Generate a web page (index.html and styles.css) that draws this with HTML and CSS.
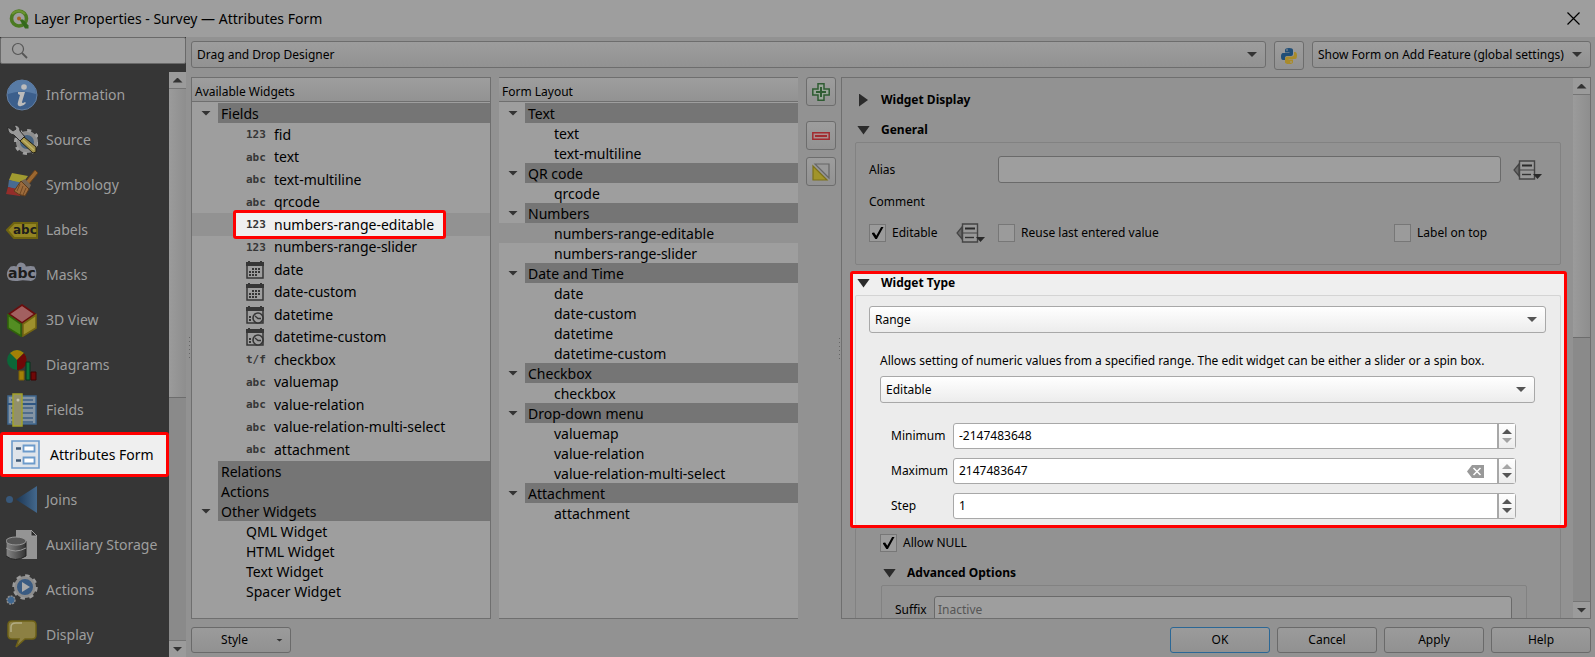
FILE: index.html
```html
<!DOCTYPE html>
<html lang="en">
<head>
  <meta charset="UTF-8" />
  <meta name="viewport" content="width=device-width, initial-scale=1.0"/>
  <title>Layer Properties - Survey — Attributes Form</title>
  <link rel="stylesheet" href="styles.css">
</head>
<body>

  <!-- shared icons -->
  <svg class="defs" width="0" height="0" aria-hidden="true">
    <symbol id="i-date" viewBox="0 0 18 18">
      <path d="M1 1v16h16V1" fill="none" stroke="#363636" stroke-width="1.500"/>
      <path d="M0 1h2V0h2v1h10V0h2v1h2v4H0z" fill="#363636"/>
      <path d="M6 7h2v2H6zM9 7h2v2H9zM12 7h2v2h-2zM3 10h2v2H3zM6 10h2v2H6zM9 10h2v2H9zM12 10h2v2h-2zM3 13h2v2H3zM6 13h2v2H6zM9 13h2v2H9z" fill="#363636"/>
    </symbol>
    <symbol id="i-datetime" viewBox="0 0 18 18">
      <path d="M1 1v16h16V1" fill="none" stroke="#363636" stroke-width="1.500"/>
      <path d="M0 1h2V0h2v1h10V0h2v1h2v4H0z" fill="#363636"/>
      <path d="M3 10h2v2H3zM3 13h2v2H3z" fill="#363636"/>
      <circle cx="12" cy="12" r="5" fill="#9e9e9e" stroke="#363636" stroke-width="1.600"/>
      <path d="M9 10l3 2.500h3" fill="none" stroke="#363636" stroke-width="1.300"/>
    </symbol>
    <symbol id="i-override" viewBox="0 0 29 20">
      <path d="M6 4L1 10l5 6z" fill="#6a6a6a" stroke="#444" stroke-width="1.200"/>
      <path d="M6.500 1h15v18h-15z" fill="#989898" stroke="#444" stroke-width="1.400"/>
      <path d="M6 10h16" stroke="#444"/>
      <path d="M9 5.500h10" stroke="#2a2a2a" stroke-width="2"/>
      <path d="M9 14.500h9" stroke="#333" stroke-width="1.400"/>
      <path d="M20 14h9l-4.500 5z" fill="#2a2a2a"/>
    </symbol>
  </svg>

  <header class="titlebar">
    <svg width="20" height="20" viewBox="0 0 20 20">
      <circle cx="10" cy="9.500" r="7.500" fill="none" stroke="#4b7a22" stroke-width="3.600"/>
      <path d="M3 5a8.500 8.500 0 0 1 13 0" fill="none" stroke="#6b9331" stroke-width="2"/>
      <path d="M10.500 10.500h3.500l5.500 6v3H16z" fill="#33691c"/>
      <circle cx="10" cy="9.500" r="2" fill="#a5651f"/>
    </svg>
    <h1>Layer Properties - Survey — Attributes Form</h1>
    <button class="close" aria-label="Close">
      <svg width="13" height="13" viewBox="0 0 13 13"><path d="M.5.5l12 12M12.500.5l-12 12" stroke="#000" stroke-width="1.200"/></svg>
    </button>
  </header>

  <div class="window">
    <aside class="sidebar">
      <label class="search">
        <svg width="17" height="17" viewBox="0 0 17 17"><circle cx="7" cy="7" r="5.500" fill="none" stroke="#555" stroke-width="1.200"/><path d="M11 11l5 5" stroke="#555" stroke-width="1.800"/></svg>
        <input type="text" aria-label="Search">
      </label>
      <div class="sidebar-body">
        <nav>
          <a href="#">
            <svg width="32" height="32" viewBox="0 0 32 32"><circle cx="16" cy="16" r="15" fill="#3c5f8c" stroke="#6480a3"/><path d="M2 15a14 14 0 0 1 28 0q-14-5-28 0z" fill="#587ba5"/><circle cx="18" cy="8" r="2.800" fill="#bbb"/><path d="M12 13h7l-3 10q0 2 3 0l1 1q-3 4-7 3-2-1-1-4l2-7-2-1z" fill="#bbb"/></svg>
            Information
          </a>
          <a href="#">
            <svg width="32" height="32" viewBox="0 0 32 32"><circle cx="21" cy="18" r="9" fill="#46627f" stroke="#8d8d8d" stroke-width="4"/><circle cx="21" cy="18" r="11.500" fill="none" stroke="#a0a0a0" stroke-width="3" stroke-dasharray="4 5"/><path d="M2 3l5 4 3-2-2-4q6 0 6 6l5 6-5 4-6-6Q1 10 2 3z" fill="#999" stroke="#2c2c2c"/><path d="M14 17l4-4 12 10v5l-3 1z" fill="#a2934b" stroke="#272315"/><path d="M17 16l11 10" stroke="#c0b366" stroke-width="1.500"/></svg>
            Source
          </a>
          <a href="#">
            <svg width="32" height="32" viewBox="0 0 32 32"><path d="M6 4l16 3-6 8L3 11z" fill="#a09a30"/><path d="M3 11l14 3-3 8-12-4z" fill="#486b91"/><path d="M2 18l14 3-2 6-14-2z" fill="#942d2a"/><path d="M29 1l3 3-9 11-3-3z" fill="#9b6730" stroke="#67401a"/><path d="M19 10l6 6-2 4-8-8z" fill="#766552"/><path d="M15 12l8 8-4 7q-7-1-11-5z" fill="#9c6b3c" stroke="#5f3c1b"/><path d="M14 15l-3 7M17 17l-3 8M20 19l-3 7" stroke="#704824"/></svg>
            Symbology
          </a>
          <a href="#">
            <svg width="32" height="32" viewBox="0 0 32 32"><path d="M1 16l7-7h23v15H8z" fill="#938522" stroke="#6f6410" stroke-width="2"/><text x="7" y="20" class="abc">abc</text></svg>
            Labels
          </a>
          <a href="#">
            <svg width="34" height="32" viewBox="0 0 34 32"><path d="M5 7q4-1 6 0 2-5 6-4 4 1 4 4 6-1 9 0 4 6 1 13-3 3-6 2-9-1-11 0-6 1-11-1-5-7 2-14z" fill="#858894"/><text x="2" y="19" class="abc big">abc</text></svg>
            Masks
          </a>
          <a href="#">
            <svg width="32" height="34" viewBox="0 0 32 34"><path d="M16 2l13 9-13 9L3 11z" fill="#a26060" stroke="#690d0d" stroke-width="1.600"/><path d="M2 12l13 9v12L2 25z" fill="#538d22" stroke="#30630b" stroke-width="1.600"/><path d="M30 12l-13 9v12l13-8z" fill="#9e902d" stroke="#746512" stroke-width="1.600"/></svg>
            3D View
          </a>
          <a href="#">
            <svg width="32" height="32" viewBox="0 0 32 32"><circle cx="11" cy="11" r="10" fill="#0c6638"/><path d="M11 11L4 4q7-6 14 0z" fill="#a18006"/><path d="M11 11l7-7q5 6 1 13-3 4-8 4z" fill="#6f0808"/><path d="M13 22h5v9h-5z" fill="#a18006" stroke="#7b6006"/><path d="M20 13h4v18h-4z" fill="#0b7039" stroke="#07331c"/><path d="M25 23h5v8h-5z" fill="#700808" stroke="#3e0303"/></svg>
            Diagrams
          </a>
          <a href="#">
            <svg width="32" height="34" viewBox="0 0 32 34"><path d="M2 3h28v28H2z" fill="#8494a4" stroke="#3e658d" stroke-width="1.500"/><path d="M2 11h28" stroke="#2f5682" stroke-width="2"/><path d="M5 7h22M5 15h22M5 20h22M5 25h22M5 29h22" stroke="#3f5f83" stroke-width="1.500"/><path d="M7 1h9v32H7z" fill="#92906a" stroke="#a2a12a" stroke-width="1.500"/><circle cx="12" cy="7" r="1.500" fill="#c4c4b0"/></svg>
            Fields
          </a>
          <a href="#" class="active">
            <svg width="29" height="29" viewBox="0 0 29 29"><path d="M1 1h27v27H1z" fill="#dfe4ea" stroke="#6d9bcb" stroke-width="1.600"/><path d="M12.500 5.500h11v6h-11zM12.500 17.500h11v6h-11z" fill="#fff" stroke="#6d9bcb" stroke-width="1.800"/><path d="M5 8.500h5M5 20.500h5" stroke="#415a76" stroke-width="2.500"/></svg>
            Attributes Form
          </a>
          <a href="#">
            <svg width="32" height="32" viewBox="0 0 32 32"><defs><linearGradient id="join"><stop offset="0" stop-color="#1d3754"/><stop offset="1" stop-color="#43688d"/></linearGradient></defs><circle cx="3.500" cy="15.500" r="3.500" fill="#38587a"/><path d="M10 15.500L31 2v27z" fill="url(#join)"/></svg>
            Joins
          </a>
          <a href="#">
            <svg width="32" height="32" viewBox="0 0 32 32"><path d="M10 1h15l6 6v23H10z" fill="#949494"/><path d="M25 1v6h6z" fill="#292929" stroke="#9e9e9e"/><defs><linearGradient id="disk"><stop offset="0" stop-color="#888"/><stop offset="1" stop-color="#333"/></linearGradient></defs><path d="M0 12v15q9 7 20 0V12z" fill="url(#disk)" stroke="#222"/><path d="M0 19q9 6 20 0" fill="none" stroke="#999"/><ellipse cx="10" cy="12" rx="10" ry="4" fill="#555" stroke="#999"/></svg>
            Auxiliary Storage
          </a>
          <a href="#">
            <svg width="32" height="34" viewBox="0 0 32 34"><circle cx="19" cy="14" r="9.500" fill="#3a5b82" stroke="#8c8c8c" stroke-width="3"/><circle cx="19" cy="14" r="11.500" fill="none" stroke="#9a9a9a" stroke-width="2.500" stroke-dasharray="4.500 4.500"/><path d="M16 9l8 5-8 5z" fill="#aaa"/><circle cx="5" cy="27" r="4" fill="#40678f" stroke="#8c8c8c" stroke-width="1.500" stroke-dasharray="2 1"/></svg>
            Actions
          </a>
          <a href="#">
            <svg width="32" height="32" viewBox="0 0 32 32"><path d="M6 2h20q4 0 4 4v10q0 4-4 4h-7l-9 8 3-8H6q-4 0-4-4V6q0-4 4-4z" fill="#8c8043" stroke="#6e6118" stroke-width="1.500"/><path d="M5 13V8q0-4 5-4h6" fill="none" stroke="#b2ac84" stroke-width="1.500"/></svg>
            Display
          </a>
        </nav>
        <div class="scrollbar">
          <button aria-label="Scroll up"><i class="tri up"></i></button>
          <div class="track"><div class="thumb side-thumb"></div></div>
          <button aria-label="Scroll down"><i class="tri"></i></button>
        </div>
      </div>
    </aside>
    <div class="splitter"></div>

    <main>
      <div class="toolbar">
        <span class="combo grow">
          <select aria-label="Form designer"><option>Drag and Drop Designer</option></select>
        </span>
        <button class="tool" aria-label="Python init function">
          <svg width="18" height="18" viewBox="0 0 18 18"><path d="M9 1Q5 1 5 3v2.500h4.500V6H3Q1 6 1 9.500T3 13h2v-2q0-2 2-2h4q2 0 2-2V3q0-2-4-2z" fill="#204e77"/><path d="M9 17q4 0 4-2v-2.500H8.500V12H15q2 0 2-3.500T15 5h-1v2.500Q14 9.500 12 9.500H7.500Q5 9.500 5 12v3q0 2 4 2z" fill="#a98b2b"/><circle cx="7" cy="3" r=".8" fill="#9e9e9e"/><circle cx="11" cy="15" r=".8" fill="#9e9e9e"/></svg>
        </button>
        <span class="combo feature">
          <select aria-label="Show form"><option>Show Form on Add Feature (global settings)</option></select>
        </span>
      </div>

      <div class="panels">
        <div class="tree">
          <div class="tree-head">Available Widgets</div>
          <details open>
            <summary><i class="tri"></i><span>Fields</span></summary>
            <ul class="fields">
              <li><b>123</b>fid</li>
              <li><b>abc</b>text</li>
              <li><b>abc</b>text-multiline</li>
              <li><b>abc</b>qrcode</li>
              <li class="selected"><b>123</b>numbers-range-editable</li>
              <li><b>123</b>numbers-range-slider</li>
              <li><svg width="18" height="18"><use href="#i-date"/></svg>date</li>
              <li><svg width="18" height="18"><use href="#i-date"/></svg>date-custom</li>
              <li><svg width="18" height="18"><use href="#i-datetime"/></svg>datetime</li>
              <li><svg width="18" height="18"><use href="#i-datetime"/></svg>datetime-custom</li>
              <li><b>t/f</b>checkbox</li>
              <li><b>abc</b>valuemap</li>
              <li><b>abc</b>value-relation</li>
              <li><b>abc</b>value-relation-multi-select</li>
              <li><b>abc</b>attachment</li>
            </ul>
          </details>
          <div class="group"><span>Relations</span></div>
          <div class="group"><span>Actions</span></div>
          <details open>
            <summary><i class="tri"></i><span>Other Widgets</span></summary>
            <ul>
              <li>QML Widget</li>
              <li>HTML Widget</li>
              <li>Text Widget</li>
              <li>Spacer Widget</li>
            </ul>
          </details>
        </div>

        <div class="tree layout">
          <div class="tree-head">Form Layout</div>
          <details open>
            <summary><i class="tri"></i><span>Text</span></summary>
            <ul><li>text</li><li>text-multiline</li></ul>
          </details>
          <details open>
            <summary><i class="tri"></i><span>QR code</span></summary>
            <ul><li>qrcode</li></ul>
          </details>
          <details open>
            <summary><i class="tri"></i><span>Numbers</span></summary>
            <ul><li class="current">numbers-range-editable</li><li>numbers-range-slider</li></ul>
          </details>
          <details open>
            <summary><i class="tri"></i><span>Date and Time</span></summary>
            <ul><li>date</li><li>date-custom</li><li>datetime</li><li>datetime-custom</li></ul>
          </details>
          <details open>
            <summary><i class="tri"></i><span>Checkbox</span></summary>
            <ul><li>checkbox</li></ul>
          </details>
          <details open>
            <summary><i class="tri"></i><span>Drop-down menu</span></summary>
            <ul><li>valuemap</li><li>value-relation</li><li>value-relation-multi-select</li></ul>
          </details>
          <details open>
            <summary><i class="tri"></i><span>Attachment</span></summary>
            <ul><li>attachment</li></ul>
          </details>
        </div>

        <div class="tools">
          <button class="tool" aria-label="Add">
            <svg width="18" height="18" viewBox="0 0 18 18"><path d="M6 .8h6V6h5.200v6H12v5.200H6V12H.8V6H6z" fill="#9aa69a" stroke="#2f5c33" stroke-width="1.500"/><path d="M9 4v10M4 9h10" stroke="#2f5c33" stroke-width="2"/></svg>
          </button>
          <button class="tool" aria-label="Remove">
            <svg width="18" height="8" viewBox="0 0 18 8"><path d="M.8.8h16.400v6.400H.8z" fill="#ab8f8f" stroke="#a12c30" stroke-width="1.500"/><path d="M3 4h12" stroke="#a12c30" stroke-width="2"/></svg>
          </button>
          <button class="tool" aria-label="Invert selection">
            <svg width="18" height="18" viewBox="0 0 18 18"><path d="M3 1h14v14z" fill="#999" stroke="#666" stroke-width="1.200"/><path d="M1 3v14h14z" fill="#a1942a" stroke="#7c711b" stroke-width="1.200"/></svg>
          </button>
        </div>
        <div class="splitter"></div>

        <section class="options">
          <div class="content">
            <div class="section closed">
              <h2><i class="fold right"></i>Widget Display</h2>
            </div>

            <div class="section">
              <h2><i class="fold"></i>General</h2>
              <div class="box general">
                <div class="row">
                  <label class="name" for="alias">Alias</label>
                  <input class="field" id="alias" type="text">
                  <button class="override" aria-label="Data defined override"><svg width="29" height="20"><use href="#i-override"/></svg></button>
                </div>
                <div class="comment">Comment</div>
                <div class="row">
                  <div class="name editable">
                    <label class="check"><input type="checkbox" checked>Editable</label>
                    <button class="override" aria-label="Data defined override"><svg width="29" height="20"><use href="#i-override"/></svg></button>
                  </div>
                  <label class="check grow"><input type="checkbox">Reuse last entered value</label>
                  <label class="check on-top"><input type="checkbox">Label on top</label>
                </div>
              </div>
            </div>

            <div class="section highlight">
              <h2><i class="fold"></i>Widget Type</h2>
              <div class="box type">
                <span class="combo">
                  <select aria-label="Widget type"><option>Range</option></select>
                </span>
                <div class="inner">
                  <p>Allows setting of numeric values from a specified range. The edit widget can be either a slider or a spin box.</p>
                  <span class="combo">
                    <select aria-label="Range widget"><option>Editable</option></select>
                  </span>
                  <div class="spins">
                    <label for="min">Minimum</label>
                    <div class="spin">
                      <input id="min" type="number" value="-2147483648">
                      <div class="steps"><button aria-label="Up"><i class="tri up"></i></button><button aria-label="Down" disabled><i class="tri"></i></button></div>
                    </div>
                    <label for="max">Maximum</label>
                    <div class="spin">
                      <input id="max" type="number" value="2147483647">
                      <button class="clear" aria-label="Clear"><svg width="17" height="13" viewBox="0 0 17 13"><path d="M0 6.500L5 0h12v13H5z" fill="#999"/><path d="M6.500 3l7 7M13.500 3l-7 7" stroke="#fff" stroke-width="1.500"/></svg></button>
                      <div class="steps"><button aria-label="Up" disabled><i class="tri up"></i></button><button aria-label="Down"><i class="tri"></i></button></div>
                    </div>
                    <label for="step">Step</label>
                    <div class="spin">
                      <input id="step" type="number" value="1">
                      <div class="steps"><button aria-label="Up"><i class="tri up"></i></button><button aria-label="Down"><i class="tri"></i></button></div>
                    </div>
                  </div>
                </div>
              </div>
            </div>

            <div class="section rest">
              <div class="box more">
                <label class="check"><input type="checkbox" checked>Allow NULL</label>
                <div class="advanced">
                  <h2><i class="fold"></i>Advanced Options</h2>
                  <div class="box suffix">
                    <label for="suffix">Suffix</label>
                    <input class="field" id="suffix" type="text" placeholder="Inactive">
                  </div>
                </div>
              </div>
            </div>
          </div>
          <div class="scrollbar">
            <button aria-label="Scroll up"><i class="tri up"></i></button>
            <div class="track"><div class="thumb"></div></div>
            <button aria-label="Scroll down"><i class="tri"></i></button>
          </div>
        </section>
      </div>

      <footer>
        <button class="btn style">Style<i class="tri small"></i></button>
        <button class="btn ok">OK</button>
        <button class="btn">Cancel</button>
        <button class="btn">Apply</button>
        <button class="btn">Help</button>
      </footer>
    </main>
  </div>

</body>
</html>
```

FILE: styles.css
```css
*,
*::before,
*::after {
  margin: 0;
  padding: 0;
  box-sizing: border-box;
}
body {
  height: 100vh;
  display: flex;
  flex-direction: column;
  overflow: hidden;
  background: #929292;
  color: #000;
  font-family: "Noto Sans", "Open Sans", sans-serif;
  font-size: 12px;
  line-height: 18px;
}
button,
input,
select {
  font: inherit;
  color: inherit;
}
button {
  display: flex;
  align-items: center;
  justify-content: center;
  background: none;
  border: none;
}
svg {
  flex: none;
}
ul {
  list-style: none;
}
.defs {
  position: absolute;
}
.grow {
  flex: 1;
}

/* small arrows */
.tri {
  flex: none;
  width: 10px;
  height: 5px;
  background: #333;
  clip-path: polygon(0 0, 100% 0, 50% 100%);
}
.tri.up {
  clip-path: polygon(0 100%, 100% 100%, 50% 0);
}
.tri.small {
  width: 7px;
  height: 3px;
}

/* title bar */
.titlebar {
  flex: none;
  height: 37px;
  display: flex;
  align-items: center;
  gap: 5px;
  padding: 0 15px 0 9px;
  background: #9e9e9e;
}
.titlebar h1 {
  flex: 1;
  font-size: 14px;
  font-weight: normal;
}
.window {
  flex: 1;
  min-height: 0;
  display: flex;
}

/* dotted handle between resizable parts */
.splitter {
  flex: none;
  align-self: center;
  width: 1px;
  height: 21px;
  margin: 0 1px 0 3px;
  background: repeating-linear-gradient(#666 0 1px, transparent 1px 4px);
}

/* sidebar */
.sidebar {
  flex: none;
  width: 186px;
  display: flex;
  flex-direction: column;
  background: #363636;
}
.search {
  flex: none;
  height: 27px;
  display: flex;
  align-items: center;
  padding-left: 10px;
  background: #9e9e9e;
  border: 1px solid #696969;
  border-radius: 2px;
}
.search input {
  flex: 1;
  min-width: 0;
  background: none;
  border: none;
}
.sidebar-body {
  flex: 1;
  min-height: 0;
  display: flex;
  padding-top: 8px;
}
nav {
  flex: 1;
}
nav a {
  display: flex;
  align-items: center;
  gap: 8px;
  height: 45px;
  padding-left: 6px;
  color: #9e9e9e;
  font-size: 14px;
  text-decoration: none;
}
nav svg {
  width: 32px;
}
nav a.active {
  gap: 10px;
  padding-left: 8px;
  background: #efefef;
  border: 3px solid #f00;
  border-radius: 3px;
  color: #000;
}
nav a.active svg {
  width: 29px;
}
.abc {
  font: bold 12px "DejaVu Sans", sans-serif;
  fill: #1d1d1d;
}
.abc.big {
  font-size: 15px;
}

/* scrollbars */
.scrollbar {
  flex: none;
  width: 17px;
  display: flex;
  flex-direction: column;
  background: #8a8a8a;
}
.scrollbar button {
  height: 17px;
  background: #9b9b9b;
  border-bottom: 1px solid #757575;
}
.scrollbar button:last-child {
  border-top: 1px solid #757575;
  border-bottom: none;
}
.track {
  flex: 1;
}
.thumb {
  height: 48%;
  background: linear-gradient(to right, #9b9b9b, #8e8e8e);
  border-bottom: 1px solid #6d6d6d;
}
.side-thumb {
  height: 56%;
}

/* main area */
main {
  flex: 1;
  min-width: 0;
  display: flex;
  flex-direction: column;
  padding: 4px 4px 4px 0;
}
.toolbar {
  flex: none;
  height: 29px;
  display: flex;
  align-items: flex-start;
  gap: 8px;
  margin-bottom: 7px;
}
.combo {
  display: flex;
  align-items: center;
  position: relative;
}
.combo select {
  width: 100%;
  height: 27px;
  padding: 0 24px 0 5px;
  appearance: none;
  background: linear-gradient(#9d9d9d, #929292);
  border: 1px solid #6d6d6d;
  border-radius: 3px;
}
.combo::after {
  content: "";
  position: absolute;
  right: 9px;
  width: 10px;
  height: 5px;
  background: #333;
  clip-path: polygon(0 0, 100% 0, 50% 100%);
}
.feature {
  width: 279px;
}
.tool {
  flex: none;
  width: 30px;
  height: 29px;
  background: linear-gradient(#9d9d9d, #929292);
  border: 1px solid #6d6d6d;
  border-radius: 3px;
}
.panels {
  flex: 1;
  min-height: 0;
  display: flex;
}

/* widget trees */
.tree {
  flex: none;
  width: 300px;
  margin-right: 8px;
  background: #9e9e9e;
  border: 1px solid #6f6f6f;
  font-size: 14px;
  line-height: 20px;
  overflow: hidden;
}
.tree-head {
  height: 24px;
  margin-bottom: 1px;
  padding: 4px 3px 0;
  background: linear-gradient(#9e9e9e, #929292);
  border-bottom: 1px solid #6f6f6f;
  font-size: 12px;
}
.tree.layout {
  width: 299px;
  border-left: none;
  border-right: none;
}
summary,
.group {
  display: flex;
  align-items: center;
  height: 20px;
  padding-left: 26px;
}
summary .tri {
  margin: 0 7px 0 -17px;
}
summary span,
.group span {
  flex: 1;
  padding-left: 3px;
  background: #757575;
  line-height: 21px;
  height: 20px;
}
.tree li {
  height: 20px;
  padding-left: 54px;
  line-height: 22px;
}
.tree.layout li {
  padding-left: 55px;
}
.tree li.current {
  background: #929292;
}
.tree .fields li {
  display: flex;
  align-items: center;
  gap: 8px;
  height: 23px;
  line-height: 24px;
}
.tree .fields li:nth-child(even) {
  height: 22px;
}
.fields b {
  width: 20px;
  color: #363636;
  font: bold 11px "DejaVu Sans Mono", monospace;
}
.fields svg {
  margin-right: 2px;
}
.fields .selected {
  position: relative;
  z-index: 0;
  background: #929292;
}
/* red frame round the selected field */
.fields .selected::before {
  content: "";
  position: absolute;
  z-index: -1;
  top: -3px;
  left: 41px;
  width: 213px;
  height: 29px;
  background: #efefef;
  border: 3px solid #f00;
  border-radius: 3px;
}

.tools {
  display: flex;
  flex-direction: column;
  gap: 7px;
}
.tools .tool:first-child {
  margin-bottom: 8px;
}

/* widget options */
.options {
  flex: 1;
  min-width: 0;
  display: flex;
  border: 1px solid #6f6f6f;
  overflow: hidden;
}
.content {
  flex: 1;
  padding: 13px 6px 0 8px;
}
.section {
  padding: 0 6px 0 5px;
  margin-bottom: 6px;
}
.section.closed {
  margin-bottom: 9px;
}
h2 {
  display: flex;
  align-items: center;
  height: 21px;
  padding: 0 0 3px 2px;
  font-size: 12px;
  font-weight: bold;
}
.fold {
  width: 13px;
  height: 9px;
  margin-right: 11px;
  background: #2b2b2b;
  clip-path: polygon(0 0, 100% 0, 50% 100%);
}
.fold.right {
  width: 9px;
  height: 13px;
  margin: 0 13px 0 2px;
  clip-path: polygon(0 0, 100% 50%, 0 100%);
}
.box {
  border: 1px solid #828282;
  border-radius: 2px;
}
.general {
  padding: 13px 14px 21px 13px;
}
.row {
  display: flex;
  align-items: center;
}
.name {
  flex: none;
  width: 129px;
}
.editable {
  display: flex;
}
.editable .check {
  width: 87px;
}
.field {
  flex: 1;
  min-width: 0;
  height: 27px;
  padding: 0 3px;
  background: #9e9e9e;
  border: 1px solid #6a6a6a;
  border-radius: 3px;
}
.field::placeholder {
  color: #555;
}
.row > .override {
  margin: 0 4px 0 12px;
}
.comment {
  margin: 10px 0 12px;
}
.check {
  display: flex;
  align-items: center;
}
.check input {
  flex: none;
  display: flex;
  align-items: center;
  justify-content: center;
  width: 17px;
  height: 18px;
  margin-right: 6px;
  appearance: none;
  background: #9b9b9b;
  border: 1px solid #777;
}
.check input:checked::before {
  content: "";
  width: 12px;
  height: 12px;
  background: #000;
  clip-path: polygon(0 50%, 22% 45%, 40% 72%, 80% 0, 100% 0, 45% 100%, 32% 100%);
}
.on-top {
  width: 152px;
}

/* highlighted section */
.section.highlight {
  margin-bottom: 0;
  padding: 0 3px 0 2px;
  background: #efefef;
  border: 3px solid #f00;
  border-radius: 3px;
}
.highlight .box {
  border-color: #d4d4d4;
  border-bottom: none;
  background: #ececec;
}
.highlight select {
  background: linear-gradient(#fff, #ececec);
  border-color: #a8a8a8;
}
.highlight .tri,
.highlight .combo::after {
  background: #555;
}
.type {
  padding: 10px 14px 6px 13px;
}
.inner {
  padding: 19px 11px 0;
}
.inner p {
  margin-bottom: 6px;
}
.spins {
  display: grid;
  grid-template-columns: 62px 1fr;
  align-items: center;
  row-gap: 9px;
  padding: 20px 19px 0 11px;
}
.spin {
  display: flex;
  align-items: center;
  height: 26px;
  background: #fff;
  border: 1px solid #a8a8a8;
  border-radius: 3px;
}
.spin input {
  flex: 1;
  min-width: 0;
  padding-left: 5px;
  background: none;
  border: none;
  appearance: textfield;
}
.spin input::-webkit-inner-spin-button {
  appearance: none;
}
.clear {
  margin-right: 13px;
}
.steps {
  width: 18px;
  height: 24px;
  display: flex;
  flex-direction: column;
  align-items: center;
  justify-content: center;
  gap: 4px;
  background: linear-gradient(#fff, #ececec);
  border-left: 2px solid #a8a8a8;
}
.steps button:disabled {
  opacity: 0.5;
}

.section.rest {
  margin-bottom: 0;
}
.more {
  padding: 6px 25px 0 24px;
  border-top: none;
  border-bottom: none;
}
.advanced {
  padding: 12px 8px 0 1px;
}
.suffix {
  display: flex;
  align-items: center;
  padding: 10px 14px 10px 13px;
}
.suffix label {
  width: 39px;
}

/* bottom buttons */
footer {
  flex: none;
  display: flex;
  gap: 7px;
  margin-top: 8px;
}
.btn {
  width: 100px;
  height: 26px;
  background: linear-gradient(#9b9b9b, #919191);
  border: 1px solid #6a6a6a;
  border-radius: 3px;
}
.btn.style {
  gap: 28px;
  margin-right: auto;
  padding-left: 22px;
}
.btn.ok {
  border-color: #2b6795;
}
```
